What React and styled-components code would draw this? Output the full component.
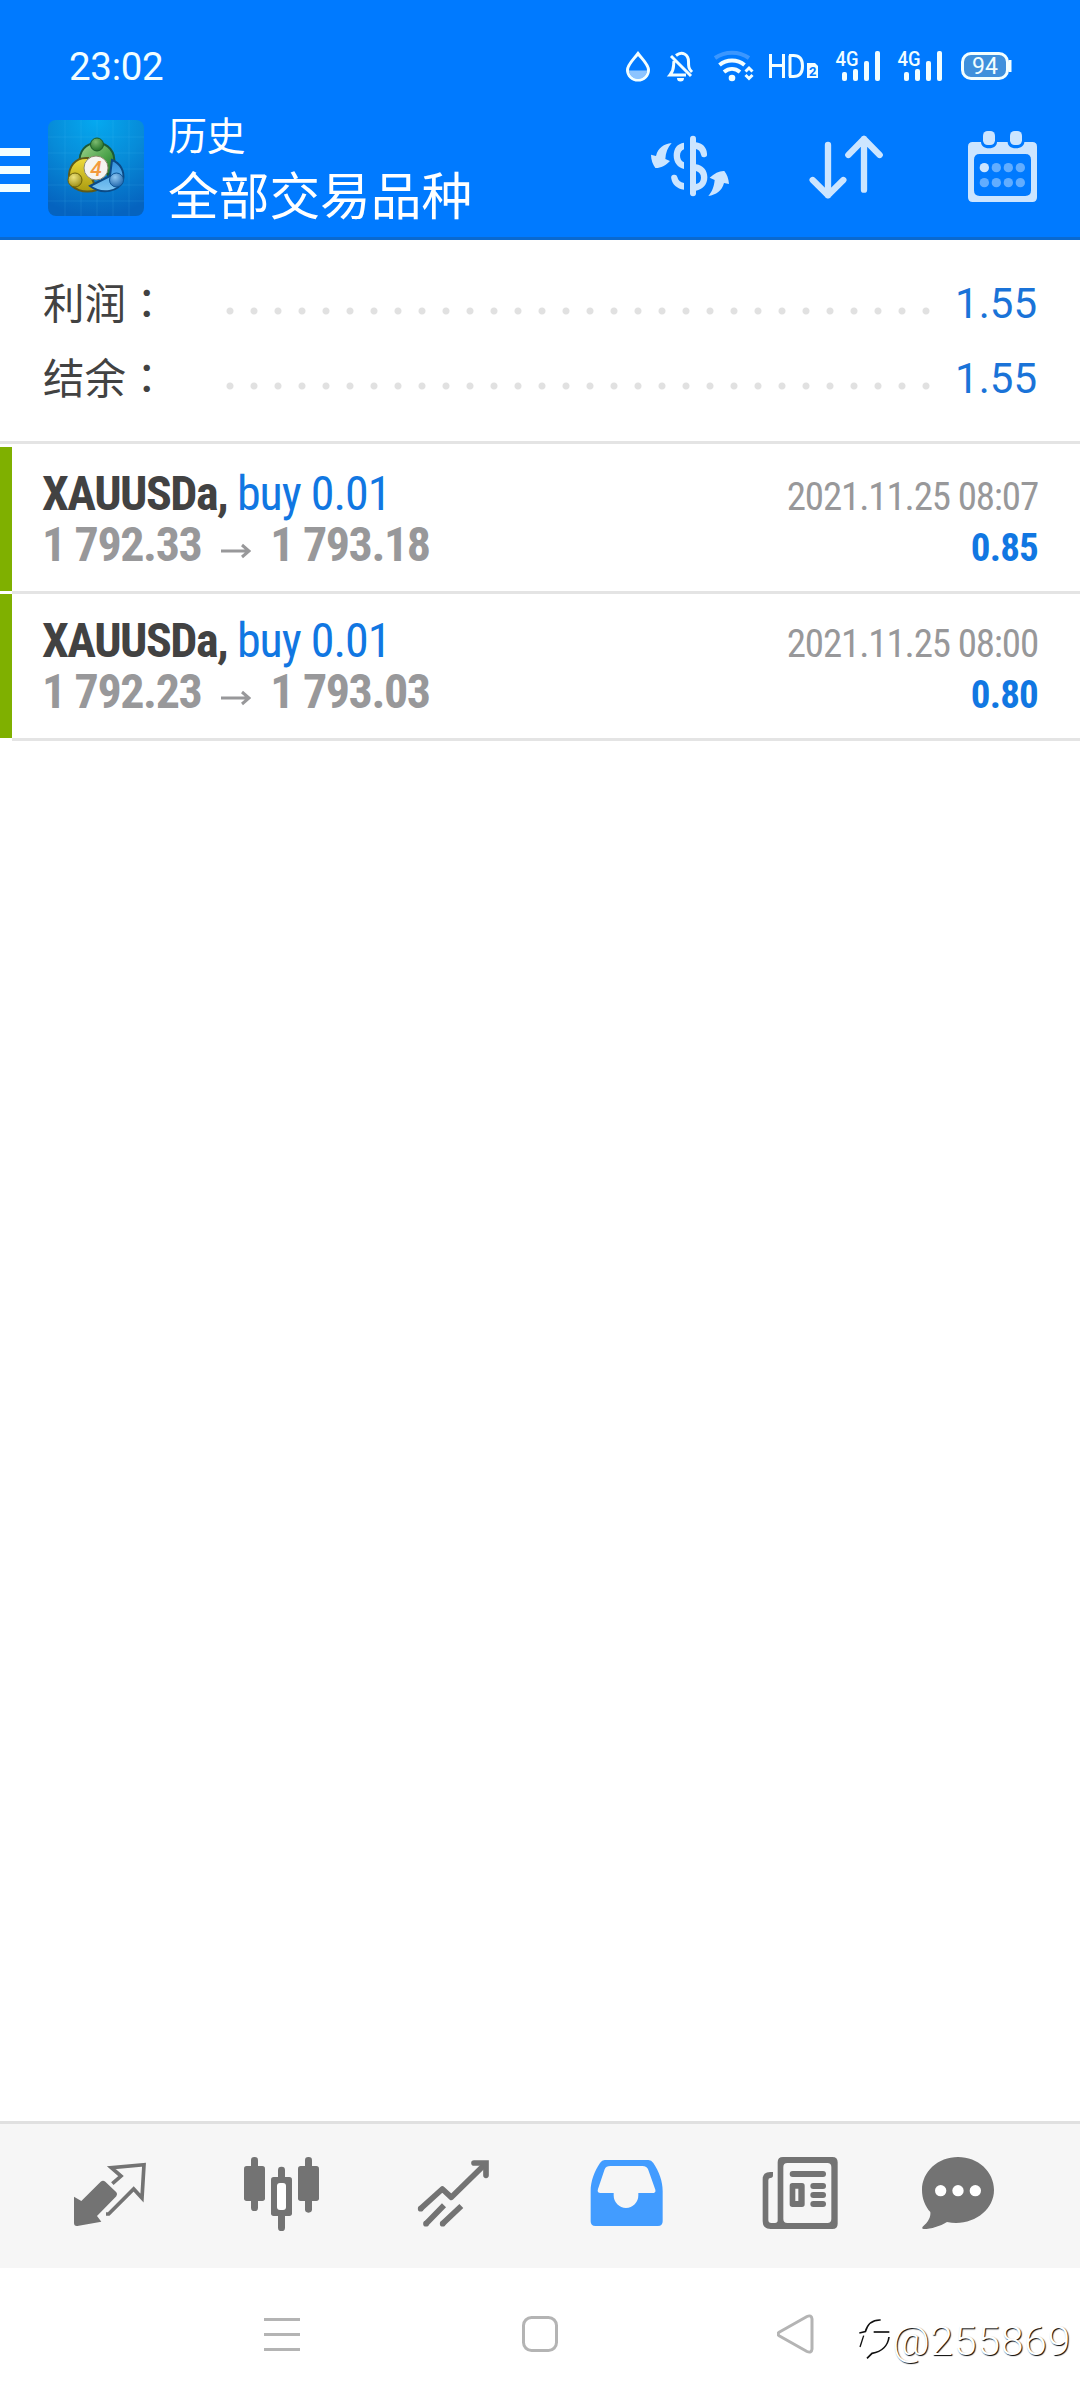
import styled, { createGlobalStyle } from 'styled-components';

const GlobalStyle = createGlobalStyle`
  * {
    box-sizing: border-box;
  }

  body {
    margin: 0;
    background: #fff;
    font-family: Roboto, "Noto Sans CJK SC", sans-serif;
  }
`;

const Screen = styled.div`
  position: relative;
  display: flex;
  flex-direction: column;
  width: 1080px;
  height: 2400px;
  background: #fff;
  overflow: hidden;
`;

const Header = styled.header`
  height: 240px;
  background: #007aff;
  border-bottom: 3px solid #0a69cf;
  color: #fff;
`;

const StatusBar = styled.div`
  display: flex;
  align-items: center;
  justify-content: space-between;
  height: 108px;
  padding: 25px 65px 0 69px;
`;

const Clock = styled.span`
  font-size: 38.5px;
  line-height: 44px;
  letter-spacing: -0.3px;
  color: #f2feff;
`;

const AppBar = styled.div`
  display: flex;
  height: 129px;
`;

const MenuButton = styled.button`
  display: flex;
  flex-direction: column;
  gap: 10px;
  width: 30px;
  margin: 40px 18px 0 0;
  padding: 0;
  border: 0;
  background: none;
`;

const MenuBar = styled.span`
  height: 8px;
  background: #f2feff;
`;

const LogoTile = styled.svg`
  width: 96px;
  height: 96px;
  margin-top: 12px;
`;

const Titles = styled.div`
  flex: 1;
  margin-left: 24px;
`;

const Caption = styled.div`
  margin-top: 3px;
  font-size: 39px;
  line-height: 52px;
  letter-spacing: -0.5px;
`;

const Title = styled.div`
  font-size: 50.7px;
  line-height: 70px;
`;

const Actions = styled.div`
  display: flex;
  margin-top: 12px;
`;

const Summary = styled.section`
  height: 204px;
  padding: 26px 43px 0 42px;
  border-bottom: 3px solid #e4e4e4;
`;

const SummaryRow = styled.div`
  display: flex;
  align-items: center;
  height: 75px;
  font-size: 42px;
`;

const SummaryLabel = styled.span`
  width: 183px;
  margin: -6px 0 0 1px;
  font-size: 41.5px;
  color: #424242;
`;

const Colon = styled.span`
  font-family: "Noto Sans CJK TC", sans-serif;
`;

const Dots = styled.span`
  width: 720px;
  height: 8px;
  margin-top: 15px;
  background: radial-gradient(circle at 4px 4px, #e1e1e1 3px, transparent 4px) 0 0 / 24px 8px;
`;

const SummaryValue = styled.span`
  flex: 1;
  text-align: right;
  color: #1a73d8;
`;

const Deals = styled.main`
  flex: 1;
  padding-top: 3px;
`;

const Deal = styled.article`
  display: flex;
  height: 147px;
`;

const Stripe = styled.span`
  width: 12px;
  height: 144px;
  background: #7fb000;
`;

const DealBody = styled.div`
  flex: 1;
  display: flex;
  justify-content: space-between;
  padding: 21px 42px 0 30px;
  border-bottom: 3px solid #e4e4e4;
`;

const Side = styled.div`
  padding-top: ${props => (props.$end ? 4 : 0)}px;
  text-align: ${props => (props.$end ? 'right' : 'left')};
`;

const Line = styled.div`
  height: 51px;
  line-height: 51px;
  white-space: pre;
  font-stretch: 75%;
  letter-spacing: ${props => props.$tracking}px;
  font-size: ${props => props.$size}px;
  font-weight: ${props => (props.$bold ? 700 : 400)};
  color: ${props => props.$color};
`;

const Volume = styled.span`
  font-weight: 400;
  letter-spacing: -1px;
  color: #1177e2;
`;

const Arrow = styled.svg`
  width: 30px;
  height: 16px;
  margin: 0 19px 2px 20px;
`;

const TabBar = styled.nav`
  display: flex;
  height: 147px;
  padding-left: 24px;
  border-top: 3px solid #e0e0e0;
  background: #f6f6f6;
  color: #737373;
`;

const SystemBar = styled.footer`
  display: flex;
  align-items: center;
  height: 132px;
  padding-left: 264px;
  color: #b4b4b4;
`;

const SystemIcon = styled.svg`
  height: 40px;
  margin-right: ${props => props.$gap || 0}px;
  fill: none;
  stroke: currentColor;
  stroke-width: 3;
`;

const Watermark = styled.div`
  position: absolute;
  right: 9px;
  bottom: 35px;
  display: flex;
  align-items: center;
  font-size: 41px;
  font-weight: 300;
  line-height: 48px;
  letter-spacing: 0.7px;
  color: #fff;
  text-shadow: 1px 1px 1px #000;
`;

const StatusIcons = () => (
  <svg width="400" height="42" viewBox="615 46 400 42" fill="none" stroke="#f2feff" fontFamily="Roboto">
    <path d="M638 53.5c4.500 6 10.500 11 10.500 16.500a10.500 10 0 0 1-21 0c0-5.500 6-10.500 10.500-16.500z" strokeWidth="3" />
    <path d="M629 70.500h18c0 4-3.500 8.500-9 8.500s-9-4.500-9-8.500z" fill="#8cc4ff" stroke="none" />
    <path d="M671 56l20 20M674 61c-1 5 1 8-4 14h16M676 55.500c6-5 12.500-1 12.500 6 0 5 0 7 3.500 10.500" strokeWidth="3" />
    <path d="M677 78h7a3.500 3.500 0 0 1-7 0zM678 54a3 3 0 0 1 5 0z" fill="#f2feff" stroke="none" />
    <path d="M715 58c10-7 24-7 34 0" stroke="#3b97ff" strokeWidth="4" />
    <path d="M719.500 65c7-6 18-6 25 0M724 72c5-4 11-4 16 0" strokeWidth="4" />
    <circle cx="732" cy="78" r="3.300" fill="#f2feff" stroke="none" />
    <path d="M745.500 71.500l3.500-3.500 3.500 3.500M745.500 75l3.500 3.500 3.500-3.500" strokeWidth="3" />
    <path d="M770.500 54v24M783.500 54v24M770.500 65.500h13M790 55.500v21M789 55.500h4.500c6.500 0 9 4 9 10.500s-2.500 10.500-9 10.500H789" strokeWidth="3" />
    <path d="M807 63h8l3 3v12h-11z" fill="#f2feff" stroke="none" />
    <text x="809" y="75.500" fontSize="13" fontWeight="700" fill="#007aff" stroke="none">2</text>
    {[0, 62].map(dx => (
      <g key={dx} transform={`translate(${dx} 0)`} fill="#f2feff" stroke="none">
        <text x="835.500" y="66" fontSize="20" fontWeight="500" textLength="23" lengthAdjust="spacingAndGlyphs">4G</text>
        <rect x="842" y="72" width="5" height="9" rx="2" />
        <rect x="853" y="69" width="5" height="12" rx="2" />
        <rect x="864" y="61" width="5" height="20" rx="2" />
        <rect x="875" y="51" width="5" height="30" rx="2" />
      </g>
    ))}
    <rect x="962.500" y="53.500" width="45" height="25" rx="8.500" fill="#3f90dc" strokeWidth="3" />
    <path d="M1010 60v12" strokeWidth="3" />
    <text x="972" y="73.500" fontSize="23" textLength="26" fill="#f2feff" stroke="none">94</text>
  </svg>
);

const AppLogo = () => (
  <LogoTile viewBox="0 0 96 96">
    <defs>
      <radialGradient id="tile" cx="0.5" cy="0" r="1">
        <stop offset="0" stopColor="#05a9f0" />
        <stop offset="0.5" stopColor="#078bd8" />
        <stop offset="1" stopColor="#0563bf" />
      </radialGradient>
      <linearGradient id="green" x1="0" y1="0" x2="1" y2="1">
        <stop offset="0" stopColor="#a5d690" />
        <stop offset="0.6" stopColor="#4ba24a" />
        <stop offset="1" stopColor="#1d6b26" />
      </linearGradient>
      <linearGradient id="yellow" x1="0" y1="0" x2="0" y2="1">
        <stop offset="0" stopColor="#f0dc3c" />
        <stop offset="1" stopColor="#a99a10" />
      </linearGradient>
      <linearGradient id="blue" x1="0" y1="0" x2="0" y2="1">
        <stop offset="0" stopColor="#2f8fdd" />
        <stop offset="1" stopColor="#7fc6f2" />
      </linearGradient>
      <radialGradient id="greenHead" cx="0.4" cy="0.3" r="0.8">
        <stop offset="0" stopColor="#7dbb70" />
        <stop offset="1" stopColor="#17681f" />
      </radialGradient>
      <radialGradient id="yellowHead" cx="0.4" cy="0.3" r="0.8">
        <stop offset="0" stopColor="#eee37c" />
        <stop offset="1" stopColor="#94850a" />
      </radialGradient>
      <radialGradient id="blueHead" cx="0.4" cy="0.3" r="0.8">
        <stop offset="0" stopColor="#8fc8f2" />
        <stop offset="1" stopColor="#155ca5" />
      </radialGradient>
    </defs>
    <rect width="96" height="96" rx="8" fill="url(#tile)" />
    <path d="M17 0v96M33 0v96M49 0v96M65 0v96M81 0v96M0 17h96M0 33h96M0 49h96M0 65h96M0 81h96" stroke="#5fc8ff" strokeOpacity="0.13" />
    <g strokeWidth="2">
      <path d="M32 44c-2-13 6-21 17-21s19 9 17 21c0 6-3 9-6 11L49 38z" fill="url(#green)" stroke="#1c5a38" />
      <path d="M40 38c-13-1-20 9-19 21 2 11 15 15 28 11l-8-18z" fill="url(#yellow)" stroke="#5f5a18" />
      <path d="M64 40c8 3 13 11 11 20-4 12-21 15-33 6l20-10z" fill="url(#blue)" stroke="#0b4a86" />
      <circle cx="49" cy="24.500" r="6.500" fill="url(#greenHead)" stroke="#1c5a28" strokeWidth="1" />
      <circle cx="27" cy="60" r="7" fill="url(#yellowHead)" stroke="#6d6208" strokeWidth="1" />
      <circle cx="68.500" cy="60" r="7" fill="url(#blueHead)" stroke="#0d5596" strokeWidth="1" />
    </g>
    <circle cx="48" cy="48" r="12" fill="#f6f4f0" stroke="#8d8a70" />
    <text x="48" y="55.500" fontFamily="Roboto" fontSize="21" fontStyle="italic" fontWeight="500" textAnchor="middle" fill="#f39a3d">4</text>
  </LogoTile>
);

const HeaderIcons = () => (
  <svg width="430" height="96" viewBox="90 30 1290 288" fill="#cce5ff">
    {/* currency exchange */}
    <path d="M155 99C132 102 114 113 108 138L93 134C93 150 99 164 106 174C120 175 137 167 150 153L136 147C137 128 143 112 155 99z" />
    <path d="M265 258C288 254 306 243 312 219L327 222C326 207 321 193 313 183C299 182 283 190 269 203L284 210C282 230 277 245 265 258z" />
    <rect x="210" y="77" width="18" height="182" rx="9" />
    <path d="M192 98C172 101 161 115 161 136C161 158 173 173 192 177V157C184 153 180 146 180 137C180 128 184 121 192 118z" />
    <path d="M228 97C247 99 260 112 261 131A9 9 0 0 1 243 134C241 124 236 119 228 117z" />
    <path d="M228 163C249 166 262 181 262 202C262 224 248 239 228 242V222C238 220 243 213 243 203C243 193 238 186 228 183z" />
    <path d="M192 239C171 236 157 223 154 206A9 9 0 0 1 172 201C174 211 181 217 192 219z" />
    {/* sort direction */}
    <g fill="none" stroke="#cce5ff" strokeWidth="19" strokeLinecap="round" strokeLinejoin="round">
      <path d="M624 105V256M578 210L624 256L670 210" />
      <path d="M732 239V87M685 135L732 87L779 135" />
    </g>
    {/* calendar */}
    <path fillRule="evenodd" d="M1058 96H1083C1083 107 1092 115 1107 115S1131 107 1131 96H1163C1163 107 1172 115 1187 115S1213 107 1213 96H1237Q1251 96 1251 110V262Q1251 276 1237 276H1058Q1044 276 1044 262V110Q1044 96 1058 96zM1079 132Q1062 132 1062 149V241Q1062 258 1079 258H1216Q1233 258 1233 241V149Q1233 132 1216 132z" />
    <rect x="1089" y="63" width="36" height="42" rx="14" />
    <rect x="1170" y="63" width="36" height="42" rx="14" />
    {[173, 218].map(cy =>
      [1093, 1129, 1165, 1201].map(cx => (
        <circle key={`${cx}-${cy}`} cx={cx} cy={cy} r="14" fillOpacity={cx === 1093 && cy === 173 ? 1 : 0.48} />
      ))
    )}
  </svg>
);

const TabIcon = ({ x, children }) => (
  <svg width="172" height="144" viewBox={`${x} 42 516 432`} fill="currentColor">
    {children}
  </svg>
);

const QuotesIcon = () => (
  <TabIcon x={-48}>
    <path d="M102 260L124 273L182 215Q189 209 196 215L229 247Q234 253 229 259L171 318L184 335L112 348Q102 349 102 339z" />
    <path d="M217 221L243 198L214 173L312 164L306 264L281 237L206 312L198 312" fill="none" stroke="currentColor" strokeWidth="11" />
  </TabIcon>
);

const ChartIcon = () => (
  <TabIcon x={468}>
    <rect x="633" y="141" width="21" height="162" rx="10" />
    <rect x="612" y="168" width="63" height="105" rx="8" />
    <rect x="795" y="141" width="21" height="167" rx="10" />
    <rect x="774" y="168" width="63" height="105" rx="8" />
    <rect x="714" y="170" width="21" height="50" rx="10" />
    <rect x="714" y="300" width="21" height="63" rx="10" />
    <rect x="693" y="201" width="63" height="117" rx="8" />
    <rect x="711" y="219" width="27" height="81" rx="9" fill="#fff" />
  </TabIcon>
);

const TradeIcon = () => (
  <TabIcon x={984}>
    <g fill="none" stroke="currentColor" strokeWidth="17">
      <path d="M1142 296L1207 237L1234 262L1332 166" strokeLinejoin="round" />
      <path d="M1302 159H1338V196" strokeLinecap="round" />
      <path d="M1158 341L1212 286M1208 341L1264 288" />
    </g>
    <circle cx="1142" cy="296" r="8.500" />
    <circle cx="1158" cy="341" r="8.500" />
    <circle cx="1208" cy="341" r="8.500" />
  </TabIcon>
);

const HistoryIcon = () => (
  <TabIcon x={-60}>
    <path fill="#429cff" fillRule="evenodd" d="M134 150H265Q274 150 280 159C297 184 308 214 308 243V334Q308 348 294 348H106Q92 348 92 334V243C92 214 103 184 120 159Q126 150 134 150zM151 168Q138 168 134 178L114 237Q110 249 122 249H161V256A37 38 0 0 0 235 256V249H276Q289 249 286 239L265 180Q261 168 247 168z" />
  </TabIcon>
);

const NewsIcon = () => (
  <TabIcon x={456}>
    <path fillRule="evenodd" d="M669 141H817Q833 141 833 157V341Q833 357 817 357H632Q608 357 608 333V208Q608 186 631 186H639V196Q639 204 631 204Q625 204 625 211V330Q625 339 634 339H645Q653 339 653 331V157Q653 141 669 141zM682 159Q670 159 670 171V327Q670 339 682 339H802Q814 339 814 327V171Q814 159 802 159z" />
    <rect x="689" y="183" width="109" height="18" rx="9" />
    <path fillRule="evenodd" d="M697 219H726Q734 219 734 227V283Q734 291 726 291H697Q689 291 689 283V227Q689 219 697 219zM706 236V273H715V236z" />
    <rect x="751" y="219" width="47" height="18" rx="9" />
    <rect x="751" y="246" width="47" height="18" rx="9" />
    <rect x="751" y="273" width="47" height="18" rx="9" />
  </TabIcon>
);

const ChatIcon = () => (
  <TabIcon x={972}>
    <path d="M1194 141C1254 141 1302 185 1302 240C1302 303 1235 351 1161 336C1140 349 1114 357 1091 357Q1084 356 1088 350C1103 338 1113 322 1111 306C1096 290 1086 267 1086 240C1086 185 1134 141 1194 141z" />
    <g fill="#fff">
      <circle cx="1142" cy="242" r="17" />
      <circle cx="1194" cy="242" r="17" />
      <circle cx="1246" cy="242" r="17" />
    </g>
  </TabIcon>
);

const WatermarkLogo = () => (
  <svg width="34" height="48" viewBox="360 130 102 144" fill="none" stroke="#111">
    <path d="M364 178L382 174C388 153 400 138 428 139" strokeWidth="5" />
    <path d="M407 175H454" strokeWidth="5" />
    <path d="M453 190C450 215 432 234 402 239L387 254" strokeWidth="5" />
    <path d="M377 186L366 220" strokeWidth="4" />
  </svg>
);

const summary = [
  { label: '利润', value: '1.55' },
  { label: '结余', value: '1.55' }
];

const deals = [
  { symbol: 'XAUUSDa', volume: 'buy 0.01', open: '1 792.33', close: '1 793.18', time: '2021.11.25 08:07', profit: '0.85' },
  { symbol: 'XAUUSDa', volume: 'buy 0.01', open: '1 792.23', close: '1 793.03', time: '2021.11.25 08:00', profit: '0.80' }
];

function App() {
  return (
    <>
      <GlobalStyle />
      <Screen>
        <Header>
          <StatusBar>
            <Clock>23:02</Clock>
            <StatusIcons />
          </StatusBar>
          <AppBar>
            <MenuButton>
              <MenuBar />
              <MenuBar />
              <MenuBar />
            </MenuButton>
            <AppLogo />
            <Titles>
              <Caption>历史</Caption>
              <Title>全部交易品种</Title>
            </Titles>
            <Actions>
              <HeaderIcons />
            </Actions>
          </AppBar>
        </Header>

        <Summary>
          {summary.map(row => (
            <SummaryRow key={row.label}>
              <SummaryLabel>{row.label}<Colon>：</Colon></SummaryLabel>
              <Dots />
              <SummaryValue>{row.value}</SummaryValue>
            </SummaryRow>
          ))}
        </Summary>

        <Deals>
          {deals.map(deal => (
            <Deal key={deal.time}>
              <Stripe />
              <DealBody>
                <Side>
                  <Line $size={48} $tracking={-1.5} $bold $color="#424242">
                    {deal.symbol}, <Volume>{deal.volume}</Volume>
                  </Line>
                  <Line $size={48} $tracking={-1.4} $bold $color="#98989a">
                    {deal.open}
                    <Arrow viewBox="0 0 30 16" fill="none" stroke="currentColor" strokeWidth="3">
                      <path d="M0 8h28M21 2l7 6-7 6" />
                    </Arrow>
                    {deal.close}
                  </Line>
                </Side>
                <Side $end>
                  <Line $size={39} $tracking={-1.15} $color="#98989a">{deal.time}</Line>
                  <Line $size={39} $tracking={-0.8} $bold $color="#1177e2">{deal.profit}</Line>
                </Side>
              </DealBody>
            </Deal>
          ))}
        </Deals>

        <TabBar>
          <QuotesIcon />
          <ChartIcon />
          <TradeIcon />
          <HistoryIcon />
          <NewsIcon />
          <ChatIcon />
        </TabBar>

        <SystemBar>
          <SystemIcon $gap={222} width="36" viewBox="0 0 36 40">
            <path d="M0 5.500h36M0 20.500h36M0 35.500h36" />
          </SystemIcon>
          <SystemIcon $gap={219} width="36" viewBox="0 0 36 40">
            <rect x="1.500" y="3.500" width="33" height="33" rx="8" />
          </SystemIcon>
          <SystemIcon width="38" viewBox="0 0 38 40" strokeLinejoin="round">
            <path d="M2.500 18L30 2.500Q34.500 0.500 35 5V35Q34.500 39.500 30 37.500L2.500 22Q-0.500 20 2.500 18z" />
          </SystemIcon>
        </SystemBar>

        <Watermark>
          <WatermarkLogo />
          @255869
        </Watermark>
      </Screen>
    </>
  );
}

export default App;
